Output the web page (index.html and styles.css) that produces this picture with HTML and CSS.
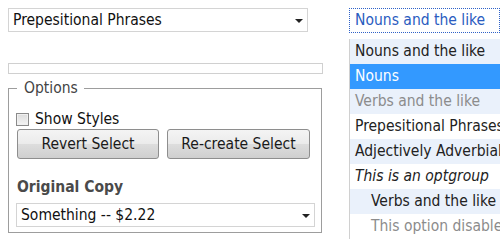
FILE: index.html
```html
<!DOCTYPE html>
<html lang="en">
<head>
  <meta charset="UTF-8" />
  <title>Select Styling</title>
  <link rel="stylesheet" href="styles.css">
</head>
<body>

  <div class="page">
    <div class="left">
      <div class="select select-top">
        <span>Prepesitional Phrases</span>
        <span class="arrow"></span>
      </div>

      <div class="bar"></div>

      <fieldset class="options">
        <legend>Options</legend>
        <label class="check">
          <span class="box"></span>
          Show Styles
        </label>
        <div class="buttons">
          <button type="button">Revert Select</button>
          <button type="button">Re-create Select</button>
        </div>
        <h3>Original Copy</h3>
        <div class="select select-copy">
          <span>Something -- $2.22</span>
          <span class="arrow"></span>
        </div>
      </fieldset>
    </div>

    <div class="right">
      <div class="current">Nouns and the like</div>
      <ul class="list">
        <li class="alt">Nouns and the like</li>
        <li class="selected">Nouns</li>
        <li class="alt disabled">Verbs and the like</li>
        <li>Prepesitional Phrases</li>
        <li class="alt">Adjectively Adverbial</li>
        <li class="group">This is an optgroup</li>
        <li class="alt child">Verbs and the like</li>
        <li class="child disabled">This option disabled</li>
      </ul>
    </div>
  </div>

</body>
</html>
```

FILE: styles.css
```css
html, body {
  margin: 0;
  padding: 0;
  overflow: hidden;
}

body {
  font-family: "DejaVu Sans Condensed", "DejaVu Sans", sans-serif;
  font-size: 15.5px;
  color: #111;
  background: white;
}

.page {
  display: flex;
  padding: 8px 0 0 8px;
  gap: 26px;
}

.left {
  width: 315px;
  flex-shrink: 0;
}

.select {
  display: flex;
  align-items: center;
  justify-content: space-between;
  height: 24px;
  box-sizing: border-box;
  border: 1px solid #d4d4d4;
  padding: 0 4px 0 4px;
  background: white;
}

.select-top {
  width: 300px;
}

.arrow {
  width: 0;
  height: 0;
  border-left: 4px solid transparent;
  border-right: 4px solid transparent;
  border-top: 4px solid #222;
  margin-top: 2px;
}

.bar {
  margin-top: 31px;
  height: 11px;
  box-sizing: border-box;
  border: 1px solid #d0d0d0;
}

.options {
  margin: 5px 1px 0 0;
  padding: 6px 7px 5px 8px;
  border: 1px solid #9d9d9d;
  min-width: 0;
}

.options legend {
  padding: 0 6px 0 7px;
  margin-left: 0;
  color: #444;
}

.check {
  display: flex;
  align-items: center;
  gap: 6px;
  height: 20px;
  margin-top: 6px;
  margin-left: -1px;
}

.box {
  width: 11px;
  height: 11px;
  border: 1px solid #8a8a8a;
  background: linear-gradient(#dcdcdc, #f4f4f4);
  box-shadow: inset 0 0 0 1px #f0f0f0;
}

.buttons {
  display: flex;
  gap: 8px;
}

.buttons button {
  width: 142px;
  height: 30px;
  padding: 0;
  font-family: inherit;
  font-size: 15.5px;
  color: #1a1a1a;
  border: 1px solid #8e8e8e;
  border-radius: 3px;
  background: linear-gradient(#f4f4f4 0%, #ebebeb 50%, #dddddd 51%, #cfcfcf 100%);
}

.buttons button + button {
  width: 143px;
}

.options h3 {
  margin: 19px 0 7px 0;
  font-size: 15.5px;
  line-height: 18px;
  color: #4a4a4a;
}

.select-copy {
  width: 299px;
  margin-left: -1px;
}

.right {
  flex: 1;
  min-width: 0;
  white-space: nowrap;
}

.current {
  height: 25px;
  line-height: 23px;
  box-sizing: border-box;
  border: 1px dotted #2f62c8;
  padding-left: 5px;
  color: #2a5cc0;
}

.list {
  list-style: none;
  margin: 6px 0 0;
  padding: 0;
  border-left: 1px solid #d0d0d0;
}

.list li {
  height: 25px;
  line-height: 25px;
  padding-left: 5px;
  color: #222;
}

.list .alt {
  background: #eaf1fb;
}

.list .selected {
  background: #3399ff;
  color: white;
}

.list .disabled {
  color: #8c8c8c;
}

.list .group {
  font-style: italic;
}

.list .child {
  padding-left: 21px;
}
```
